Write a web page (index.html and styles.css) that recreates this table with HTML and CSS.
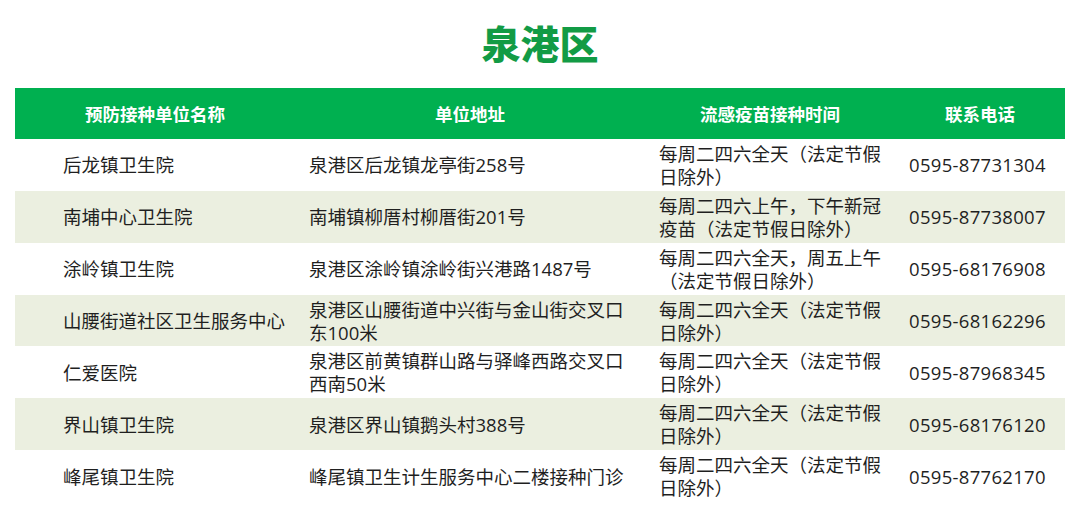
FILE: index.html
```html
<!DOCTYPE html>
<html lang="zh-CN">
<head>
<meta charset="utf-8">
<title>泉港区</title>
<link rel="stylesheet" href="styles.css">
</head>
<body>
<div class="page">
  <h1 class="title">泉港区</h1>
  <table class="sites">
    <colgroup>
      <col class="c-name">
      <col class="c-addr">
      <col class="c-time">
      <col class="c-tel">
    </colgroup>
    <thead>
      <tr>
        <th>预防接种单位名称</th>
        <th>单位地址</th>
        <th>流感疫苗接种时间</th>
        <th>联系电话</th>
      </tr>
    </thead>
    <tbody>
      <tr>
        <td class="name">后龙镇卫生院</td>
        <td>泉港区后龙镇龙亭街258号</td>
        <td class="time">每周二四六全天（法定节假日除外）</td>
        <td class="tel">0595-87731304</td>
      </tr>
      <tr class="alt">
        <td class="name">南埔中心卫生院</td>
        <td>南埔镇柳厝村柳厝街201号</td>
        <td class="time">每周二四六上午，下午新冠疫苗（法定节假日除外）</td>
        <td class="tel">0595-87738007</td>
      </tr>
      <tr>
        <td class="name">涂岭镇卫生院</td>
        <td>泉港区涂岭镇涂岭街兴港路1487号</td>
        <td class="time">每周二四六全天，周五上午（法定节假日除外）</td>
        <td class="tel">0595-68176908</td>
      </tr>
      <tr class="alt">
        <td class="name">山腰街道社区卫生服务中心</td>
        <td>泉港区山腰街道中兴街与金山街交叉口东100米</td>
        <td class="time">每周二四六全天（法定节假日除外）</td>
        <td class="tel">0595-68162296</td>
      </tr>
      <tr>
        <td class="name">仁爱医院</td>
        <td>泉港区前黄镇群山路与驿峰西路交叉口西南50米</td>
        <td class="time">每周二四六全天（法定节假日除外）</td>
        <td class="tel">0595-87968345</td>
      </tr>
      <tr class="alt">
        <td class="name">界山镇卫生院</td>
        <td>泉港区界山镇鹅头村388号</td>
        <td class="time">每周二四六全天（法定节假日除外）</td>
        <td class="tel">0595-68176120</td>
      </tr>
      <tr>
        <td class="name">峰尾镇卫生院</td>
        <td>峰尾镇卫生计生服务中心二楼接种门诊</td>
        <td class="time">每周二四六全天（法定节假日除外）</td>
        <td class="tel">0595-87762170</td>
      </tr>
    </tbody>
  </table>
</div>
</body>
</html>
```

FILE: styles.css
```css
html, body {
  margin: 0;
  padding: 0;
  background: #ffffff;
}

.page {
  width: 1080px;
  height: 524px;
  padding: 0 15px;
  box-sizing: border-box;
  font-family: "Open Sans", "Noto Sans CJK SC", sans-serif;
  color: #1f1f1f;
}

.title {
  margin: 0;
  height: 88px;
  display: flex;
  align-items: center;
  justify-content: center;
  font-family: "Noto Sans CJK SC", sans-serif;
  font-size: 39px;
  font-weight: 900;
  color: #129b45;
  line-height: 1;
  padding-bottom: 4px;
  box-sizing: border-box;
}

.sites {
  width: 1050px;
  border-collapse: collapse;
  table-layout: fixed;
}

.c-name { width: 280px; }
.c-addr { width: 350px; }
.c-time { width: 250px; }
.c-tel  { width: 170px; }

.sites th {
  height: 51px;
  padding: 0;
  background: #00b050;
  color: #ffffff;
  font-family: "Noto Sans CJK SC", sans-serif;
  font-size: 17.5px;
  font-weight: 700;
  text-align: center;
  vertical-align: middle;
  line-height: 1;
}

.sites td {
  height: 51.86px;
  padding: 0 18px 0 14px;
  font-size: 18.5px;
  line-height: 23px;
  vertical-align: middle;
  text-align: left;
  box-sizing: border-box;
}

.sites td.name {
  padding-left: 48px;
  padding-right: 0;
}

.sites td.time {
  padding-right: 8px;
}

.sites td.tel {
  padding-right: 0;
  letter-spacing: 0.3px;
}

.sites tr.alt td {
  background: #ebefe0;
}
```
